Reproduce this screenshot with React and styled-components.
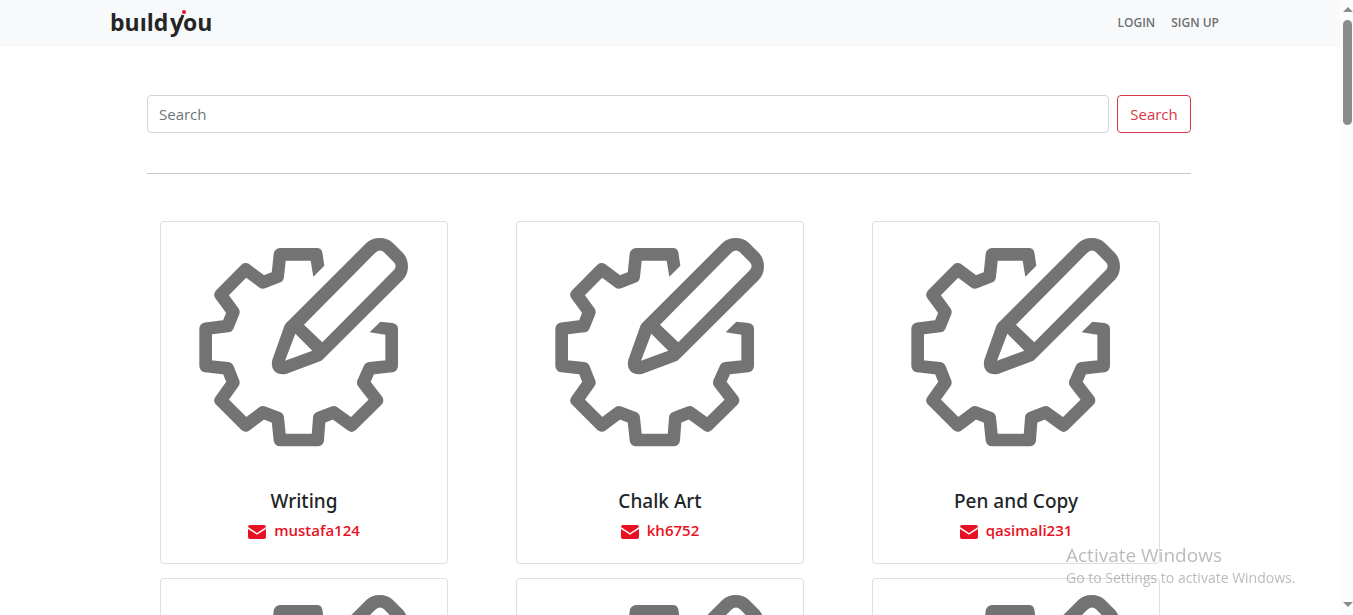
import React from "react";
import styled, { createGlobalStyle } from "styled-components";

const GlobalStyle = createGlobalStyle`
  *, *::before, *::after { box-sizing: border-box; }
  body {
    margin: 0;
    background: #fff;
    color: #212529;
    font-family: "Segoe UI", "Open Sans", "Noto Sans", sans-serif;
    font-size: 15px;
    line-height: 24px;
  }
`;

const Page = styled.div`
  height: 100vh;
  overflow: hidden;
`;

const NavBar = styled.header`
  background: #f8f9fb;
  padding-right: 15px;
`;

const NavInner = styled.div`
  display: flex;
  align-items: center;
  justify-content: space-between;
  max-width: 1140px;
  height: 47px;
  margin: 0 auto;
  padding: 0 12px 2px;
`;

const LogoLink = styled.a`
  display: block;
  height: 32px;
  svg { display: block; overflow: visible; }
`;

const NavLinks = styled.nav`
  display: flex;
  gap: 16px;
  padding-right: 8px;
`;

const NavLink = styled.a`
  color: #6f7072;
  font-size: 12px;
  font-weight: 600;
  text-decoration: none;
`;

const Main = styled.main`
  padding-right: 15px;
`;

const Content = styled.div`
  max-width: 1044px;
  margin: 0 auto;
  padding-top: 48px;
`;

const SearchForm = styled.form`
  display: flex;
  gap: 8px;
  padding-bottom: 40px;
  border-bottom: 1px solid #c8c9ca;
`;

const SearchInput = styled.input`
  flex: 1;
  min-width: 0;
  height: 38px;
  padding: 0 11px;
  border: 1px solid #ced4da;
  border-radius: 4px;
  color: #212529;
  font: inherit;
  &::placeholder { color: #6c757d; opacity: 1; }
`;

const SearchButton = styled.button`
  min-width: 74px;
  height: 38px;
  padding: 0 12px;
  border: 1px solid #dc3545;
  border-radius: 4px;
  background: transparent;
  color: #dc3545;
  font: inherit;
`;

const CardGrid = styled.section`
  display: grid;
  grid-template-columns: repeat(3, 1fr);
  gap: 14px 24px;
  padding: 47px 0 0 13px;
  margin-right: -13px;
`;

const Card = styled.article`
  width: 288px;
  height: 343px;
  border: 1px solid #dfdfdf;
  border-radius: 4px;
  text-align: center;
  svg { display: block; }
`;

const CardTitle = styled.h2`
  margin: 17px 0 5px;
  font-family: "Segoe UI", "Noto Sans", "Open Sans", sans-serif;
  font-size: 19px;
  font-weight: 500;
  line-height: 24px;
`;

const UserLink = styled.a`
  display: inline-flex;
  align-items: center;
  gap: 8px;
  color: #e81123;
  font-size: 15px;
  font-weight: 600;
  text-decoration: none;
  svg { margin-top: 3px; }
`;

const ScrollTrack = styled.div`
  position: fixed;
  inset: 0 0 0 auto;
  display: flex;
  flex-direction: column;
  align-items: center;
  width: 13px;
  padding: 7px 0 8px 2px;
  background: #fcfcfc;
`;

const Arrow = styled.div`
  border: 5px solid transparent;
  border-top-width: ${(p) => (p.$down ? 5 : 0)}px;
  border-bottom-width: ${(p) => (p.$down ? 0 : 5)}px;
  border-${(p) => (p.$down ? "top" : "bottom")}-color: #8b8b8b;
`;

const Thumb = styled.div`
  width: 9px;
  height: 105px;
  margin: 8px 0 auto;
  border-radius: 5px;
  background: #8b8b8b;
`;

const Watermark = styled.aside`
  position: fixed;
  right: 51px;
  bottom: 27px;
  width: 236px;
  color: rgba(120, 120, 120, 0.5);
  font-size: 14px;
  line-height: 20px;
  white-space: nowrap;
  pointer-events: none;
`;

const WatermarkTitle = styled.div`
  font-size: 19px;
  line-height: 26px;
`;

const Logo = () => (
  <svg width="102" height="32" viewBox="0 0 102 32" role="img" aria-label="buildyou">
    <g fill="#232526" fontFamily="'Open Sans', 'Noto Sans', sans-serif" fontWeight="700" fontSize="23">
      <text x="-1" y="24">buıld</text>
      <text x="59" y="24">y</text>
      <text x="72" y="24">ou</text>
    </g>
    <path d="M67 20L72 8" stroke="#232526" strokeWidth="3" />
    <circle cx="73" cy="5" r="2" fill="#e8112d" />
  </svg>
);

const SkillArt = () => (
  <svg width="286" height="250" viewBox="-87 21 858 750" aria-hidden="true">
    <path
      d="M383 118H270L263 185L219 202L167 163L92 239L130 291L113 333L47 341V453L113 460L130 503L92 556L167 631L219 592L263 609L270 675H383L388 609L431 592L485 631L561 556L520 503L539 460L605 453V341"
      fill="none"
      stroke="#737373"
      strokeWidth="38"
      strokeLinejoin="round"
    />
    <path
      d="M362 137L370 185L403 152L397 112Q394 99 380 99L365 118ZM539 352L571 320L607 324Q624 327 624 342L586 359Z"
      fill="#737373"
    />
    <path
      fill="#737373"
      fillRule="evenodd"
      d="M288 325L529 84Q546 69 569 69Q593 69 609 84L639 114Q654 131 654 155Q654 178 638 195L399 433Q395 437 390 439L290 476Q268 482 253 468Q242 455 247 434L283 333Q285 328 288 325ZM342 329L556 113Q570 101 582 112L611 141Q623 153 611 166L397 382ZM316 356L367 407L285 437Z"
    />
  </svg>
);

const MailIcon = () => (
  <svg width="18" height="14" viewBox="0 0 18 14" aria-hidden="true">
    <path
      fill="#e81123"
      d="M2 0H16Q18 0 18 2L9 8L0 2Q0 0 2 0ZM0 4L8 9Q9 10 10 9L18 4V12Q18 14 16 14H2Q0 14 0 12Z"
    />
  </svg>
);

const SERVICES = [
  { title: "Writing", user: "mustafa124" },
  { title: "Chalk Art", user: "kh6752" },
  { title: "Pen and Copy", user: "qasimali231" },
];

export default function App() {
  return (
    <>
      <GlobalStyle />
      <Page>
        <NavBar>
          <NavInner>
            <LogoLink href="#home"><Logo /></LogoLink>
            <NavLinks>
              <NavLink href="#login">LOGIN</NavLink>
              <NavLink href="#signup">SIGN UP</NavLink>
            </NavLinks>
          </NavInner>
        </NavBar>
        <Main>
          <Content>
            <SearchForm onSubmit={(e) => e.preventDefault()}>
              <SearchInput type="search" placeholder="Search" aria-label="Search" />
              <SearchButton type="submit">Search</SearchButton>
            </SearchForm>
            <CardGrid>
              {SERVICES.map((s) => (
                <Card key={s.user}>
                  <SkillArt />
                  <CardTitle>{s.title}</CardTitle>
                  <UserLink href={"#" + s.user}><MailIcon />{s.user}</UserLink>
                </Card>
              ))}
              {SERVICES.map((s) => (
                <Card key={"next-" + s.user}>
                  <SkillArt />
                </Card>
              ))}
            </CardGrid>
          </Content>
        </Main>
      </Page>
      <ScrollTrack aria-hidden="true">
        <Arrow />
        <Thumb />
        <Arrow $down />
      </ScrollTrack>
      <Watermark>
        <WatermarkTitle>Activate Windows</WatermarkTitle>
        Go to Settings to activate Windows.
      </Watermark>
    </>
  );
}
